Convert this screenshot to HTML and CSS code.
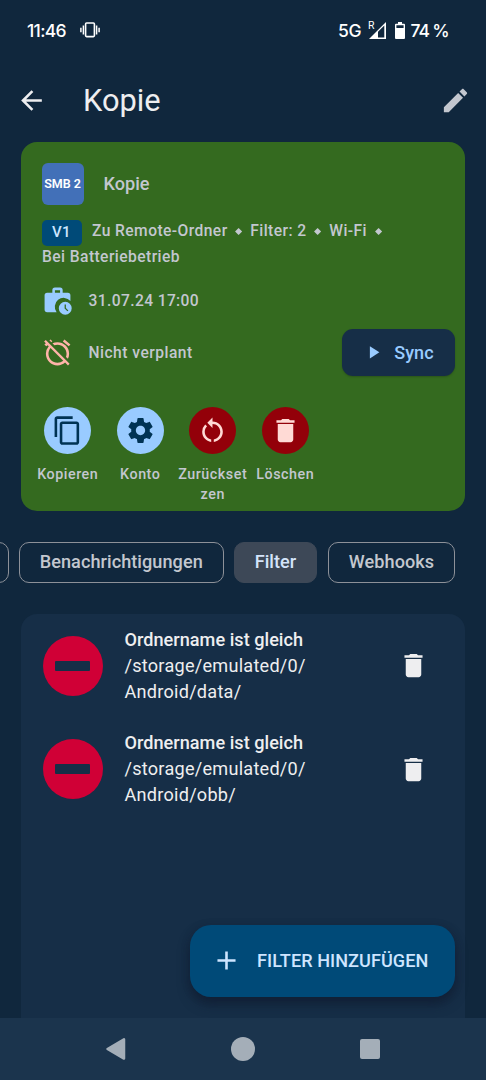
FILE: index.html
```html
<!DOCTYPE html>
<html lang="de">
<head>
<meta charset="utf-8">
<title>Kopie</title>
<link rel="stylesheet" href="styles.css">
</head>
<body>
<div class="screen">
  <div class="status">
    <span class="clock">11:46</span>
    <svg class="vibrate" width="20" height="16" viewBox="0 0 20 16"><rect x="5.6" y="1" width="8.8" height="13.6" rx="1" fill="none" stroke="#fff" stroke-width="1.6"/><path d="M3.4 3.5v9M16.6 3.5v9M.9 5.7v4.6M19.1 5.7v4.6" stroke="#fff" stroke-width="1.5"/></svg>
    <span class="net">5G</span>
    <span class="signal"><span class="roam">R</span><svg width="17" height="17" viewBox="0 0 17 17"><path d="M0 17 17 0v17H0zM9 9.8v5.700h6.300V3.600z" fill="#fff" fill-rule="evenodd"/></svg></span>
    <svg class="battery" width="10" height="17" viewBox="0 0 10 17"><path d="M3 0h4v1.700h2a1 1 0 0 1 1 1V16a1 1 0 0 1-1 1H1a1 1 0 0 1-1-1V2.700a1 1 0 0 1 1-1h2zM1.400 3.300v2.700h7.200V3.300z" fill="#fff" fill-rule="evenodd"/></svg>
    <span class="percent">74 %</span>
  </div>

  <header class="appbar">
    <svg class="icon" viewBox="0 0 24 24" fill="#eeeef0"><path d="M20 11H7.830l5.590-5.590L12 4l-8 8 8 8 1.410-1.410L7.830 13H20v-2z"/></svg>
    <h1>Kopie</h1>
    <svg class="icon" viewBox="0 0 24 24" fill="#c3c7cf"><path d="M3 17.250V21h3.750L17.810 9.940l-3.750-3.750L3 17.250zM20.710 7.040c.39-.39.39-1.020 0-1.410l-2.340-2.340c-.39-.39-1.020-.39-1.410 0l-1.830 1.830 3.750 3.750 1.830-1.830z"/></svg>
  </header>

  <section class="card">
    <div class="account"><span class="smb">SMB 2</span><span class="name">Kopie</span></div>
    <div class="tags">
      <div class="tagline"><span class="badge">V1</span><span>Zu Remote-Ordner</span><i class="dot"></i><span>Filter: 2</span><i class="dot"></i><span>Wi-Fi</span><i class="dot"></i></div>
      <div class="tagline"><span>Bei Batteriebetrieb</span></div>
    </div>
    <div class="row">
      <svg class="icon" viewBox="0 0 24 24" fill="#99cbff"><path d="M10 2h4a2 2 0 0 1 2 2v2h4a2 2 0 0 1 2 2v4.300A6.900 6.900 0 0 0 11.300 21H4a2 2 0 0 1-2-2V8a2 2 0 0 1 2-2h4V4a2 2 0 0 1 2-2zm0 2v2h4V4z" fill-rule="evenodd"/><path d="M18 13a5 5 0 1 0 0 10 5 5 0 0 0 0-10zm-.5 2h1v2.800l1.900 1.900-.7.700-2.200-2.200z" fill-rule="evenodd"/></svg>
      <span class="date">31.07.24 17:00</span>
    </div>
    <div class="row schedule">
      <svg class="icon" viewBox="0 0 24 24" fill="#ffb4a9"><path d="M12 6c3.870 0 7 3.130 7 7 0 .840-.160 1.650-.430 2.400l1.520 1.520c.580-1.190.910-2.510.910-3.920a9 9 0 0 0-9-9c-1.410 0-2.730.330-3.920.910L9.600 6.430C10.350 6.160 11.160 6 12 6zm10-.280l-4.600-3.860-1.290 1.530 4.600 3.860L22 5.720zM2.920 2.290L1.650 3.570 2.980 4.900l-1.110.930 1.420 1.420 1.110-.940.800.800A8.964 8.964 0 0 0 3 13c0 4.970 4.020 9 9 9 2.250 0 4.310-.830 5.890-2.200l2.200 2.200 1.270-1.270L3.890 3.270l-.970-.980zm13.550 16.100A6.940 6.940 0 0 1 12 20c-3.870 0-7-3.130-7-7 0-1.700.610-3.260 1.610-4.470l9.860 9.860zM8.020 3.280L6.600 1.860l-.860.710 1.420 1.420.860-.710z"/></svg>
      <span>Nicht verplant</span>
      <button class="sync"><svg width="20.700" height="20.700" viewBox="0 0 24 24" fill="#99cbff"><path d="M8 5v14l11-7z"/></svg><span>Sync</span></button>
    </div>
    <div class="actions">
      <div class="action"><span class="disc blue"><svg class="icon" viewBox="0 0 24 24"><path d="M16 1H4c-1.100 0-2 .9-2 2v14h2V3h12V1zm3 4H8c-1.100 0-2 .9-2 2v14c0 1.100.9 2 2 2h11c1.100 0 2-.9 2-2V7c0-1.100-.9-2-2-2zm0 16H8V7h11v14z"/></svg></span><span>Kopieren</span></div>
      <div class="action"><span class="disc blue"><svg class="icon" viewBox="0 0 24 24"><path d="M19.140 12.940c.040-.3.060-.610.060-.940 0-.320-.020-.640-.070-.940l2.030-1.580c.180-.140.230-.410.120-.610l-1.920-3.320c-.120-.220-.370-.290-.590-.220l-2.390.960c-.5-.380-1.030-.7-1.620-.940l-.360-2.540c-.040-.240-.240-.410-.480-.410h-3.840c-.240 0-.430.170-.470.410l-.360 2.540c-.590.240-1.130.570-1.620.940l-2.390-.960c-.220-.080-.470 0-.590.220L2.740 8.870c-.120.210-.080.470.120.610l2.030 1.580c-.050.3-.090.630-.090.940s.020.640.070.940l-2.030 1.580c-.180.140-.230.410-.120.610l1.920 3.320c.120.220.370.290.590.220l2.390-.960c.5.380 1.030.7 1.620.940l.360 2.540c.050.240.240.410.480.410h3.840c.240 0 .440-.170.470-.410l.360-2.540c.590-.240 1.130-.560 1.620-.940l2.390.960c.220.080.470 0 .590-.220l1.920-3.320c.120-.220.070-.470-.120-.610l-2.010-1.580zM12 15.600c-1.980 0-3.600-1.620-3.600-3.600s1.620-3.600 3.600-3.600 3.600 1.620 3.600 3.600-1.620 3.600-3.600 3.600z"/></svg></span><span>Konto</span></div>
      <div class="action"><span class="disc red"><svg class="icon" viewBox="0 0 24 24"><path d="M12 5V2L8 6l4 4V7c3.310 0 6 2.690 6 6 0 2.970-2.170 5.430-5 5.910v2.020c3.950-.490 7-3.850 7-7.930 0-4.420-3.580-8-8-8zm-6 8c0-1.650.670-3.150 1.760-4.240L6.340 7.340A8.014 8.014 0 0 0 4 13c0 4.080 3.050 7.440 7 7.930v-2.020c-2.830-.480-5-2.940-5-5.910z"/></svg></span><span>Zurückset<br>zen</span></div>
      <div class="action"><span class="disc red"><svg class="icon" viewBox="0 0 24 24"><path d="M6 19c0 1.100.9 2 2 2h8c1.100 0 2-.9 2-2V7H6v12zM19 4h-3.500l-1-1h-5l-1 1H5v2h14V4z"/></svg></span><span>Löschen</span></div>
    </div>
  </section>

  <nav class="chips">
    <span class="chip edge"></span>
    <span class="chip c1">Benachrichtigungen</span>
    <span class="chip c2 active">Filter</span>
    <span class="chip c3">Webhooks</span>
  </nav>

  <section class="filters">
    <div class="filter">
      <span class="minus"></span>
      <div class="text"><b>Ordnername ist gleich</b><br>/storage/emulated/0/<br>Android/data/</div>
      <svg class="icon" viewBox="0 0 24 24" fill="#eeeef0"><path d="M6 19c0 1.100.9 2 2 2h8c1.100 0 2-.9 2-2V7H6v12zM19 4h-3.500l-1-1h-5l-1 1H5v2h14V4z"/></svg>
    </div>
    <div class="filter">
      <span class="minus"></span>
      <div class="text"><b>Ordnername ist gleich</b><br>/storage/emulated/0/<br>Android/obb/</div>
      <svg class="icon" viewBox="0 0 24 24" fill="#eeeef0"><path d="M6 19c0 1.100.9 2 2 2h8c1.100 0 2-.9 2-2V7H6v12zM19 4h-3.500l-1-1h-5l-1 1H5v2h14V4z"/></svg>
    </div>
  </section>

  <button class="fab"><svg class="icon" viewBox="0 0 24 24" fill="#cde5ff"><path d="M19 13h-6v6h-2v-6H5v-2h6V5h2v6h6v2z"/></svg><span>FILTER HINZUFÜGEN</span></button>

  <footer class="navbar">
    <svg width="22" height="24" viewBox="0 0 22 24"><path d="M2.500 12 19 2.400V21.600z" fill="#a4aeb8" stroke="#a4aeb8" stroke-width="2.500" stroke-linejoin="round"/></svg>
    <span class="home"></span>
    <span class="recent"></span>
  </footer>
</div>
</body>
</html>
```
FILE: styles.css
```css
* { box-sizing: border-box; }
body { margin: 0; background: #10273d; font-family: Roboto, sans-serif; }
button { border: 0; padding: 0; font: inherit; }
.screen { position: relative; width: 486px; height: 1080px; overflow: hidden; display: flex; flex-direction: column; white-space: nowrap; background: #10273d; }
.icon { width: 31px; height: 31px; flex: none; display: block; }

.status { height: 60px; flex: none; display: flex; align-items: center; padding-left: 27px; color: #fff; font: 500 17.5px Inter, sans-serif; }
.clock { width: 53px; letter-spacing: -.7px; }
.net { margin-left: 238px; width: 31px; letter-spacing: -.2px; }
.signal { position: relative; width: 17px; height: 17px; display: flex; }
.roam { position: absolute; left: -1px; top: -2px; font: 400 10.5px/12px Roboto, sans-serif; }
.battery { margin-left: 8.500px; }
.percent { margin-left: 6px; letter-spacing: -1.100px; }

.appbar { height: 82px; flex: none; display: flex; align-items: center; padding: 0 15.500px 1px; }
h1 { flex: 1; margin: 1px 0 0 36.500px; font-size: 30.800px; font-weight: 400; line-height: 40px; color: #eeeef0; }

.card { margin: 0 21px; height: 368.500px; flex: none; padding: 21px 10px 0 20.500px; border-radius: 16px; background: #346a1f; color: #c3c7cf; }
.account { display: flex; align-items: center; gap: 20px; height: 42px; }
.smb { width: 42px; height: 42px; border-radius: 6px; background: #4270b8; color: #fff; font-size: 12.5px; font-weight: 600; line-height: 41px; text-align: center; }
.name { font-size: 18.100px; font-weight: 500; padding-bottom: 2px; }
.tags { margin-top: 13px; font-size: 15.600px; font-weight: 500; line-height: 26px; letter-spacing: .43px; }
.tagline { display: flex; align-items: center; height: 26px; padding-left: .5px; }
.badge { width: 40px; height: 26px; margin: 4px 10.500px 0 -.5px; border-radius: 5px; background: #004a78; color: #cde5ff; font-size: 15px; line-height: 25px; text-align: center; }
.dot { width: 5.200px; height: 5.200px; margin: 1px 9px 0 8.500px; transform: rotate(45deg); background: currentColor; }
.row { display: flex; align-items: center; gap: 16px; height: 31px; margin-top: 15px; font-size: 15.600px; font-weight: 500; letter-spacing: .48px; }
.date { letter-spacing: .38px; padding-top: 1px; }
.schedule { height: 47px; margin-top: 13px; }
.sync { margin-left: auto; width: 113px; height: 47px; border-radius: 11px; background: #162e47; color: #99cbff; display: flex; align-items: center; padding-left: 20.500px; gap: 11px; font-size: 18px; font-weight: 500; letter-spacing: .1px; box-shadow: 0 1px 2px rgba(0,0,0,.2); }
.actions { display: flex; margin: 30.500px 0 0 -10px; }
.action { width: 72.500px; display: flex; flex-direction: column; align-items: center; gap: 10px; text-align: center; font-size: 14.300px; font-weight: 500; line-height: 20.700px; letter-spacing: .53px; }
.disc { width: 47px; height: 47px; border-radius: 50%; display: flex; align-items: center; justify-content: center; }
.blue { background: #99cbff; fill: #003354; }
.red { background: #930009; fill: #ffdad5; }

.chips { display: flex; height: 41px; flex: none; margin-top: 31.500px; }
.chip { height: 41px; border: 1.300px solid #8d9199; border-radius: 10px; color: #c3c7cf; font-size: 18.100px; font-weight: 500; line-height: 38px; text-align: center; letter-spacing: .06px; flex: none; }
.edge { width: 60px; margin-left: -51.500px; }
.c1 { width: 204.500px; margin-left: 10.500px; }
.c2 { width: 83px; margin-left: 10.500px; }
.c3 { width: 127px; margin-left: 11px; }
.active { background: #3d4857; border-color: #3d4857; color: #d4e4fa; }

.filters { flex: 1; margin: 31px 21px 0; padding: 12.500px 36px 0 21.500px; border-radius: 16px 16px 0 0; background: #162e47; color: #eeeef0; }
.filter { display: flex; align-items: center; height: 78px; margin-bottom: 25.700px; }
.minus { width: 60px; height: 60px; border-radius: 50%; background: #d00036; display: flex; align-items: center; justify-content: center; }
.minus::after { content: ""; width: 35px; height: 10px; border-radius: 1px; background: #162e47; }
.text { flex: 1; margin-left: 22px; font-size: 18.100px; line-height: 26px; letter-spacing: .25px; }
.text b { font-weight: 500; letter-spacing: .03px; }

.fab { position: absolute; right: 31px; bottom: 83px; width: 265px; height: 72.500px; border-radius: 21px; background: #004a78; color: #cde5ff; display: flex; align-items: center; padding-left: 20.500px; gap: 15.500px; font-size: 18.100px; font-weight: 500; letter-spacing: .05px; box-shadow: 0 7px 12px rgba(15,25,45,.6), 0 2px 8px rgba(15,25,45,.3); }
.navbar { position: relative; height: 62px; flex: none; background: #1b344d; display: flex; align-items: center; padding-left: 105px; }
.home { width: 24px; height: 24px; margin-left: 104px; border-radius: 50%; background: #a4aeb8; }
.recent { width: 20px; height: 20px; margin-left: 105px; border-radius: 2px; background: #a4aeb8; }
```
